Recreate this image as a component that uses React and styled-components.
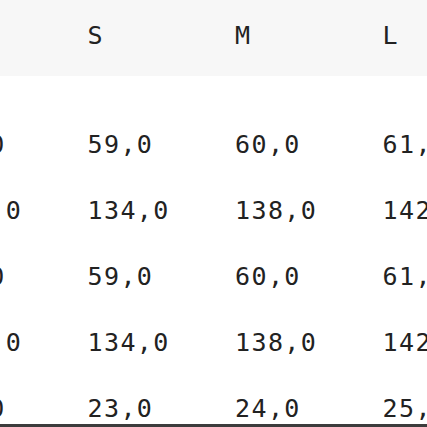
import React from 'react';
import styled, { createGlobalStyle } from 'styled-components';

const GlobalStyle = createGlobalStyle`
  html, body {
    margin: 0;
    padding: 0;
    background: #ffffff;
  }
`;

const sizes = ['', 'S', 'M', 'L'];

const rows = [
  ['58,0', '59,0', '60,0', '61,0'],
  ['130,0', '134,0', '138,0', '142,0'],
  ['58,0', '59,0', '60,0', '61,0'],
  ['130,0', '134,0', '138,0', '142,0'],
  ['22,0', '23,0', '24,0', '25,0'],
];

const SizeChart = () => (
  <Frame>
    <Table>
      <HeaderRow>
        {sizes.map((s, i) => (
          <Cell key={i}>{s}</Cell>
        ))}
      </HeaderRow>
      <Body>
        {rows.map((row, r) => (
          <Row key={r}>
            {row.map((v, i) => (
              <Cell key={i}>{v}</Cell>
            ))}
          </Row>
        ))}
      </Body>
    </Table>
  </Frame>
);

const Frame = styled.div`
  width: 427px;
  height: 424px;
  overflow: hidden;
  border-bottom: 3px solid #3c3c3c;
  background: #fff;
`;

const Table = styled.div`
  margin-left: -60px;
  width: 600px;
  font-family: "DejaVu Sans Mono", "Liberation Mono", monospace;
  font-size: 25px;
  letter-spacing: 1.4px;
  color: #222;
`;

const HeaderRow = styled.div`
  display: grid;
  grid-template-columns: repeat(4, 147.5px);
  align-items: center;
  height: 76px;
  padding-bottom: 6px;
  box-sizing: border-box;
  background: #f7f7f7;
`;

const Body = styled.div`
  padding-top: 35px;
`;

const Row = styled.div`
  display: grid;
  grid-template-columns: repeat(4, 147.5px);
  align-items: center;
  height: 66px;
`;

const Cell = styled.div`
  white-space: nowrap;
  line-height: 1;
`;

const App = () => (
  <>
    <GlobalStyle />
    <SizeChart />
  </>
);

export default App;
